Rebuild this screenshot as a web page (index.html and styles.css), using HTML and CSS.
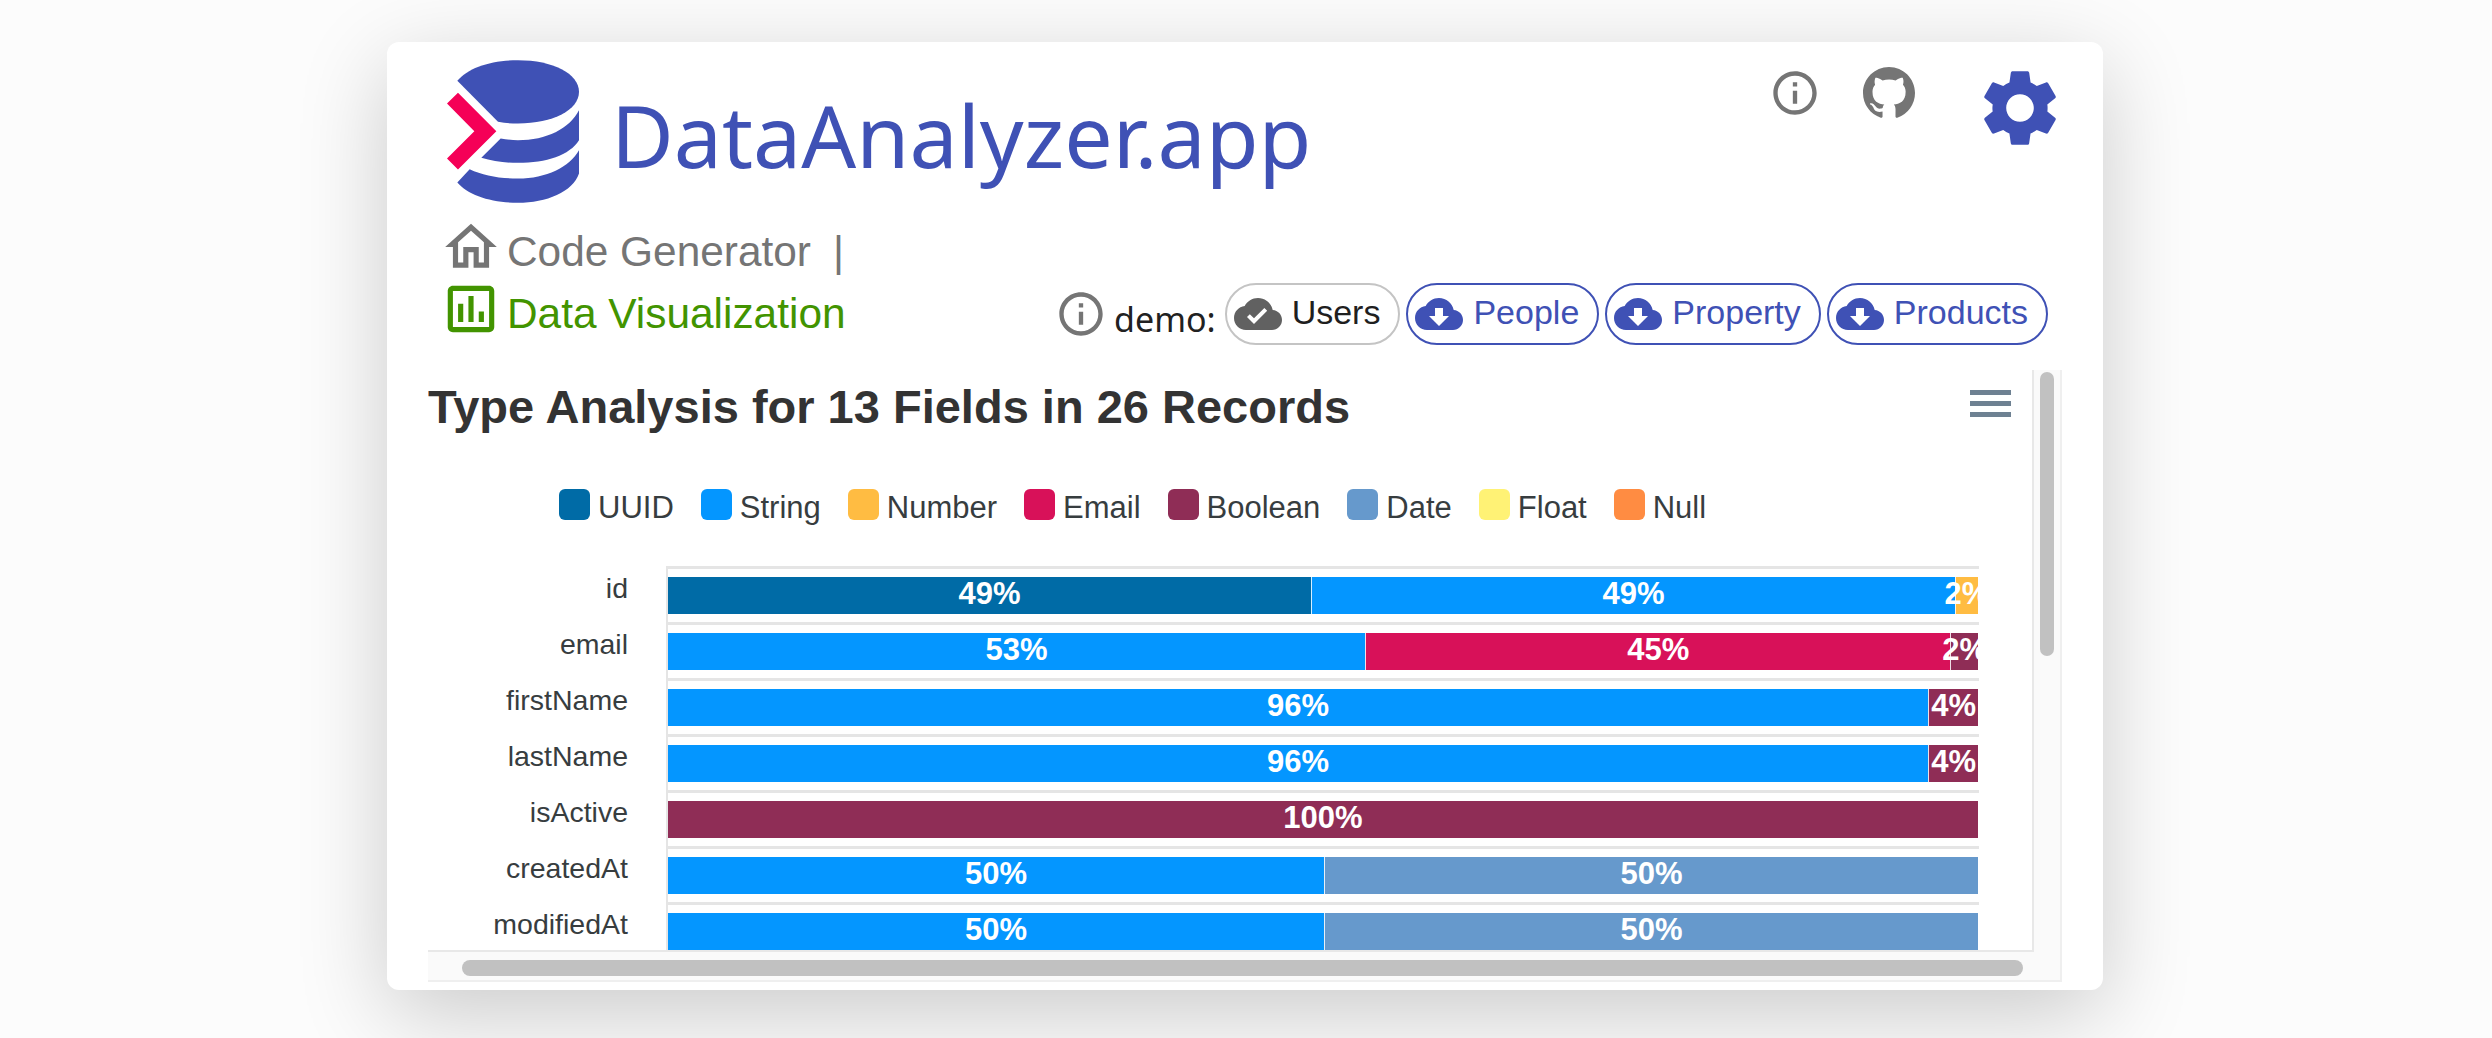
FILE: index.html
```html
<!DOCTYPE html>
<html lang="en">
<head>
    <meta charset="UTF-8">
    <title>DataAnalyzer.app</title>
    <link rel="stylesheet" href="styles.css">
</head>
<body>

<div class="card">
    <header class="top">
        <svg class="logo" viewBox="52 30 396 428">
            <path fill="#3f51b5" d="M83 92C115 52 185 30 265 30C370 30 448 70 448 125C448 180 370 220 265 220C245 220 225 219 205 215Z"/>
            <path fill="#3f51b5" d="M213 265C230 268 248 270 265 270C350 270 420 235 448 180V270C420 315 350 338 265 338C225 338 188 333 155 323Z"/>
            <path fill="#3f51b5" d="M120 357C160 376 210 385 265 385C350 385 420 350 448 300V370C430 425 350 458 265 458C185 458 115 435 83 397Z"/>
            <path fill="#f50057" d="M85 128L200 243L85 358L52 325L134 243L52 160Z"/>
        </svg>
        <h1 class="brand">DataAnalyzer.app</h1>
        <div class="top-icons">
            <svg class="icon-md info-top" viewBox="0 0 24 24"><path fill="#757575" d="M11 7h2v2h-2zm0 4h2v6h-2zm1-9C6.48 2 2 6.48 2 12s4.48 10 10 10 10-4.48 10-10S17.52 2 12 2zm0 18c-4.41 0-8-3.59-8-8s3.59-8 8-8 8 3.59 8 8-3.59 8-8 8z"/></svg>
            <svg class="icon-md" viewBox="0 0 16 16"><path fill="#757575" d="M8 0C3.58 0 0 3.58 0 8c0 3.54 2.29 6.53 5.47 7.59.4.07.55-.17.55-.38 0-.19-.01-.82-.01-1.49-2.01.37-2.53-.49-2.69-.94-.09-.23-.48-.94-.82-1.13-.28-.15-.68-.52-.01-.53.63-.01 1.08.58 1.23.82.72 1.21 1.87.87 2.33.66.07-.52.28-.87.51-1.07-1.78-.2-3.64-.89-3.64-3.95 0-.87.31-1.59.82-2.15-.08-.2-.36-1.02.08-2.12 0 0 .67-.21 2.2.82.64-.18 1.32-.27 2-.27.68 0 1.36.09 2 .27 1.53-1.04 2.2-.82 2.2-.82.44 1.1.16 1.92.08 2.12.51.56.82 1.27.82 2.15 0 3.07-1.87 3.75-3.65 3.95.29.25.54.73.54 1.48 0 1.07-.01 1.93-.01 2.2 0 .21.15.46.55.38A8.013 8.013 0 0016 8c0-4.42-3.58-8-8-8z"/></svg>
            <svg class="gear" viewBox="0 0 24 24"><path fill="#3f51b5" d="M19.14 12.94c.04-.3.06-.61.06-.94 0-.32-.02-.64-.07-.94l2.03-1.58c.18-.14.23-.41.12-.61l-1.92-3.32c-.12-.22-.37-.29-.59-.22l-2.39.96c-.5-.38-1.03-.7-1.62-.94l-.36-2.54c-.04-.24-.24-.41-.48-.41h-3.84c-.24 0-.43.17-.47.41l-.36 2.54c-.59.24-1.13.57-1.62.94l-2.39-.96c-.22-.08-.47 0-.59.22L2.74 8.87c-.12.21-.08.47.12.61l2.03 1.58c-.05.3-.09.63-.09.94s.02.64.07.94l-2.03 1.58c-.18.14-.23.41-.12.61l1.92 3.32c.12.22.37.29.59.22l2.39-.96c.5.38 1.03.7 1.62.94l.36 2.54c.05.24.24.41.48.41h3.84c.24 0 .44-.17.47-.41l.36-2.54c.59-.24 1.13-.56 1.62-.94l2.39.96c.22.08.47 0 .59-.22l1.92-3.32c.12-.22.07-.47-.12-.61l-2.01-1.58zM12 15.6c-1.98 0-3.6-1.62-3.6-3.6s1.62-3.6 3.6-3.6 3.6 1.62 3.6 3.6-1.62 3.6-3.6 3.6z"/></svg>
        </div>
    </header>

    <nav class="nav">
        <div class="nav-links">
            <a class="nav-link">
                <svg class="icon-lg" viewBox="0 0 24 24"><path fill="#757575" d="M12 5.69l5 4.5V18h-2v-6H9v6H7v-7.81l5-4.5M12 3L2 12h3v8h6v-6h2v6h6v-8h3L12 3z"/></svg>
                <span class="nav-text">Code Generator</span>
                <span class="nav-text sep">|</span>
            </a>
            <a class="nav-link active">
                <svg class="icon-lg" viewBox="0 0 24 24"><path fill="#429400" d="M19 3H5c-1.1 0-2 .9-2 2v14c0 1.1.9 2 2 2h14c1.1 0 2-.9 2-2V5c0-1.1-.9-2-2-2zm0 16H5V5h14v14zM7 10h2v7H7zm4-3h2v10h-2zm4 6h2v4h-2z"/></svg>
                <span class="nav-text">Data Visualization</span>
            </a>
        </div>
        <div class="demos">
            <svg class="icon-md" viewBox="0 0 24 24"><path fill="#757575" d="M11 7h2v2h-2zm0 4h2v6h-2zm1-9C6.48 2 2 6.48 2 12s4.48 10 10 10 10-4.48 10-10S17.52 2 12 2zm0 18c-4.41 0-8-3.59-8-8s3.59-8 8-8 8 3.59 8 8-3.59 8-8 8z"/></svg>
            <span class="demo-label">demo:</span>
            <button class="pill loaded">
                <svg class="cloud" viewBox="0 0 24 24"><path fill="#616161" d="M19.35 10.04C18.67 6.59 15.64 4 12 4 9.11 4 6.6 5.64 5.35 8.04 2.34 8.36 0 10.91 0 14c0 3.31 2.69 6 6 6h13c2.76 0 5-2.24 5-5 0-2.64-2.05-4.78-4.65-4.96zM10 17l-3.5-3.5 1.41-1.41L10 14.17 15.18 9l1.41 1.41L10 17z"/></svg>
                <span class="pill-text">Users</span>
            </button>
            <button class="pill">
                <svg class="cloud" viewBox="0 0 24 24"><path fill="#3f51b5" d="M19.35 10.04C18.67 6.59 15.64 4 12 4 9.11 4 6.6 5.64 5.35 8.04 2.34 8.36 0 10.91 0 14c0 3.31 2.69 6 6 6h13c2.76 0 5-2.24 5-5 0-2.64-2.05-4.78-4.65-4.96zM17 13l-5 5-5-5h3V9h4v4h3z"/></svg>
                <span class="pill-text">People</span>
            </button>
            <button class="pill">
                <svg class="cloud" viewBox="0 0 24 24"><path fill="#3f51b5" d="M19.35 10.04C18.67 6.59 15.64 4 12 4 9.11 4 6.6 5.64 5.35 8.04 2.34 8.36 0 10.91 0 14c0 3.31 2.69 6 6 6h13c2.76 0 5-2.24 5-5 0-2.64-2.05-4.78-4.65-4.96zM17 13l-5 5-5-5h3V9h4v4h3z"/></svg>
                <span class="pill-text">Property</span>
            </button>
            <button class="pill">
                <svg class="cloud" viewBox="0 0 24 24"><path fill="#3f51b5" d="M19.35 10.04C18.67 6.59 15.64 4 12 4 9.11 4 6.6 5.64 5.35 8.04 2.34 8.36 0 10.91 0 14c0 3.31 2.69 6 6 6h13c2.76 0 5-2.24 5-5 0-2.64-2.05-4.78-4.65-4.96zM17 13l-5 5-5-5h3V9h4v4h3z"/></svg>
                <span class="pill-text">Products</span>
            </button>
        </div>
    </nav>

    <div class="scrollbox">
        <section class="chart">
            <div class="chart-head">
                <h2 class="chart-title">Type Analysis for 13 Fields in 26 Records</h2>
                <div class="burger"><i></i><i></i><i></i></div>
            </div>
            <ul class="legend">
                <li><b class="uuid"></b>UUID</li>
                <li><b class="string"></b>String</li>
                <li><b class="number"></b>Number</li>
                <li><b class="email"></b>Email</li>
                <li><b class="boolean"></b>Boolean</li>
                <li><b class="date"></b>Date</li>
                <li><b class="float"></b>Float</li>
                <li><b class="null"></b>Null</li>
            </ul>
            <div class="rows">
                <div class="row">
                    <div class="row-label">id</div>
                    <div class="plot"><div class="bar">
                        <div class="seg uuid" style="width: 49.08%">49%</div>
                        <div class="seg string" style="width: 49.16%">49%</div>
                        <div class="seg number" style="width: 1.76%">2%</div>
                    </div></div>
                </div>
                <div class="row">
                    <div class="row-label">email</div>
                    <div class="plot"><div class="bar">
                        <div class="seg string" style="width: 53.2%">53%</div>
                        <div class="seg email" style="width: 44.7%">45%</div>
                        <div class="seg boolean" style="width: 2.1%">2%</div>
                    </div></div>
                </div>
                <div class="row">
                    <div class="row-label">firstName</div>
                    <div class="plot"><div class="bar">
                        <div class="seg string" style="width: 96.2%">96%</div>
                        <div class="seg boolean" style="width: 3.8%">4%</div>
                    </div></div>
                </div>
                <div class="row">
                    <div class="row-label">lastName</div>
                    <div class="plot"><div class="bar">
                        <div class="seg string" style="width: 96.2%">96%</div>
                        <div class="seg boolean" style="width: 3.8%">4%</div>
                    </div></div>
                </div>
                <div class="row">
                    <div class="row-label">isActive</div>
                    <div class="plot"><div class="bar">
                        <div class="seg boolean" style="width: 100%">100%</div>
                    </div></div>
                </div>
                <div class="row">
                    <div class="row-label">createdAt</div>
                    <div class="plot"><div class="bar">
                        <div class="seg string" style="width: 50.08%">50%</div>
                        <div class="seg date" style="width: 49.92%">50%</div>
                    </div></div>
                </div>
                <div class="row">
                    <div class="row-label">modifiedAt</div>
                    <div class="plot"><div class="bar">
                        <div class="seg string" style="width: 50.08%">50%</div>
                        <div class="seg date" style="width: 49.92%">50%</div>
                    </div></div>
                </div>
            </div>
        </section>
        <div class="vtrack"><div class="vthumb"></div></div>
        <div class="htrack"><div class="hthumb"></div></div>
    </div>
</div>

</body>
</html>
```

FILE: styles.css
```css
body {
    margin: 0;
    height: 1038px;
    overflow: hidden;
    background-color: #fcfcfc;
}

.card {
    width: 1716px;
    height: 948px;
    margin: 42px 0 0 387px;
    background-color: #fff;
    border-radius: 12px;
    box-shadow: 0 24px 90px rgba(0, 0, 0, 0.2);
}

.top {
    display: flex;
    align-items: flex-start;
    height: 143px;
    padding: 18px 37px 13px 60px;
}

.logo {
    width: 132px;
    height: 143px;
    flex: none;
}

.brand {
    margin: 25px 0 0 32px;
    font: 400 86px/100px "Noto Sans", sans-serif;
    color: #3f51b5;
}

.top-icons {
    display: flex;
    align-items: flex-start;
    margin-left: auto;
    padding-top: 7px;
}

.icon-md {
    width: 52px;
    height: 52px;
    flex: none;
}

.info-top {
    margin-right: 42px;
}

.gear {
    width: 92px;
    height: 92px;
    margin: -5px 0 0 59px;
}

.nav {
    display: flex;
    justify-content: space-between;
    height: 134px;
    padding: 0 55px 0 53px;
}

.nav-links {
    display: flex;
    flex-direction: column;
}

.nav-link {
    display: flex;
    align-items: center;
    height: 62px;
    font: 400 42.4px "Liberation Sans", sans-serif;
    color: #757575;
}

.nav-link.active {
    color: #429400;
}

.nav-text {
    padding-top: 10px;
}

.icon-lg {
    width: 62px;
    height: 62px;
    margin-right: 5px;
}

.sep {
    margin-left: 22px;
}

.demos {
    display: flex;
    align-items: center;
    align-self: flex-end;
    gap: 6px;
    margin-bottom: 5px;
}

.demo-label {
    margin: 10px 3px 0 1px;
    font: 400 34px "Noto Sans", sans-serif;
    color: #212121;
}

.pill {
    display: flex;
    align-items: center;
    gap: 10px;
    height: 62px;
    padding: 0 18px 0 7px;
    background: #fff;
    border: 2px solid #3f51b5;
    border-radius: 31px;
    font: 400 34px "Liberation Sans", sans-serif;
    color: #3f51b5;
}

.pill-text {
    padding-bottom: 3px;
}

.pill.loaded {
    border-color: #c4c4c4;
    color: #1f1f1f;
}

.cloud {
    width: 48px;
    height: 48px;
}

.scrollbox {
    display: grid;
    grid-template-columns: 1606px 28px;
    grid-template-rows: 582px 30px;
    margin: 20px 0 0 41px;
    width: 1634px;
}

.chart {
    overflow: hidden;
    box-sizing: border-box;
    border-right: 2px solid #e8e8e8;
    border-bottom: 2px solid #e8e8e8;
    font-family: "Liberation Sans", sans-serif;
}

.chart-head {
    display: flex;
    justify-content: space-between;
    align-items: flex-start;
    padding-right: 21px;
    height: 119px;
}

.chart-title {
    margin: 0;
    padding-top: 11px;
    font-size: 47px;
    line-height: 52px;
    font-weight: 700;
    color: #333;
}

.burger {
    display: flex;
    flex-direction: column;
    gap: 6px;
    width: 41px;
    padding-top: 20px;
}

.burger i {
    display: block;
    height: 5px;
    background-color: #6e8192;
}

.legend {
    display: flex;
    align-items: flex-start;
    gap: 27px;
    list-style: none;
    margin: 0;
    padding: 0 0 0 131px;
    height: 77px;
    font-size: 31px;
    line-height: 38px;
    color: #373d3f;
}

.legend li {
    display: flex;
    align-items: center;
    gap: 8px;
}

.legend b {
    display: block;
    width: 31px;
    height: 31px;
    margin-bottom: 7px;
    border-radius: 6px;
}

.uuid { background-color: #006ba6; }
.string { background-color: #0496ff; }
.number { background-color: #ffbc42; }
.email { background-color: #d81159; }
.boolean { background-color: #8f2d56; }
.date { background-color: #6699cc; }
.float { background-color: #fff275; }
.null { background-color: #ff8c42; }

.row {
    display: flex;
    height: 56px;
}

.row-label {
    box-sizing: border-box;
    width: 238px;
    padding: 2px 38px 0 0;
    text-align: right;
    font-size: 28.5px;
    line-height: 40px;
    color: #373d3f;
}

.plot {
    box-sizing: border-box;
    width: 1313px;
    padding: 8px 1px 0 0;
    border-top: 3px solid #e5e5e5;
    border-left: 2px solid #e5e5e5;
}

.bar {
    display: flex;
    height: 37px;
    overflow: hidden;
}

.seg {
    display: flex;
    justify-content: center;
    align-items: center;
    box-sizing: border-box;
    padding-bottom: 3px;
    white-space: nowrap;
    font-size: 31px;
    font-weight: 700;
    color: #fff;
}

.seg + .seg {
    border-left: 1px solid rgba(255, 255, 255, 0.85);
}

.vtrack {
    box-sizing: border-box;
    padding: 2px 6px 0;
    background-color: #fafafa;
    border-right: 2px solid #efefef;
}

.vthumb {
    height: 284px;
    background-color: #c1c1c1;
    border-radius: 8px;
}

.htrack {
    grid-column: 1 / 3;
    box-sizing: border-box;
    padding: 8px 37px 0 34px;
    background-color: #fafafa;
    border-right: 2px solid #efefef;
    border-bottom: 2px solid #efefef;
}

.hthumb {
    height: 16px;
    background-color: #c1c1c1;
    border-radius: 8px;
}
```
